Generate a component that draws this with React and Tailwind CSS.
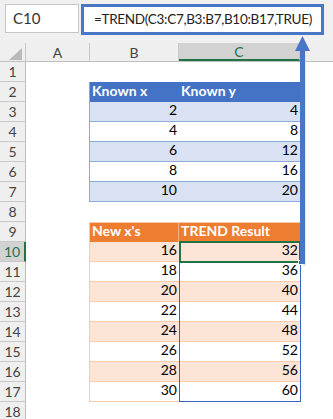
const FONT = { fontFamily: "Lato, 'Liberation Sans', sans-serif" };

const known = [
  [2, 4],
  [4, 8],
  [6, 12],
  [8, 16],
  [10, 20],
];
const newX = [16, 18, 20, 22, 24, 26, 28, 30];

function rowCells(n) {
  if (n === 2) {
    return {
      b: { text: "Known x", cls: "bg-[#4472c4] text-white font-bold justify-start pl-[2px] border-l border-l-[#8ea9db]" },
      c: { text: "Known y", cls: "bg-[#4472c4] text-white font-bold justify-start pl-[2px]" },
    };
  }
  if (n >= 3 && n <= 7) {
    const [x, y] = known[n - 3];
    const band = n % 2 === 1 ? "bg-[#d9e1f2]" : "bg-white";
    return {
      b: { text: x, cls: `${band} justify-end pr-[2px] border-l border-l-[#8ea9db] border-b border-b-[#8ea9db]` },
      c: { text: y, cls: `${band} justify-end pr-[2px] border-b border-b-[#8ea9db]` },
    };
  }
  if (n === 9) {
    return {
      b: { text: "New x's", cls: "bg-[#ed7d31] text-white font-bold justify-start pl-[2px] border-l border-l-[#f8cbad] border-t border-t-[#f8cbad] border-r border-r-[#f4b084]" },
      c: { text: "TREND Result", cls: "bg-[#ed7d31] text-white font-bold justify-start pl-[2px] border-t border-t-[#f8cbad]" },
    };
  }
  if (n >= 10 && n <= 17) {
    const x = newX[n - 10];
    const band = n % 2 === 0 ? "bg-[#fce4d6]" : "bg-white";
    return {
      b: { text: x, cls: `${band} justify-end pr-[2px] border-l border-l-[#f8cbad] border-b border-b-[#f8cbad]` },
      c: { text: x * 2, cls: `${band} justify-end pr-[2px] border-b border-b-[#f8cbad]` },
    };
  }
  return { b: { text: "", cls: "bg-white" }, c: { text: "", cls: "bg-white" } };
}

function Row({ n }) {
  const { b, c } = rowCells(n);
  const active = n === 10;
  return (
    <div className="flex h-[20px]">
      <div
        className={
          active
            ? "w-[26px] shrink-0 flex items-center justify-center bg-[#d2d2d2] text-[#217346] border-b border-b-[#c8c8c8] border-r-2 border-r-[#217346] text-[14px]"
            : "w-[26px] shrink-0 flex items-center justify-center bg-[#efefef] text-[#444] border-b border-b-[#c8c8c8] border-r border-r-[#bdbdbd] text-[14px]"
        }
      >
        {n}
      </div>
      <div className="w-[63px] shrink-0 bg-white" />
      <div className={`w-[90px] shrink-0 flex items-end pb-[1px] text-[14px] text-black ${b.cls}`}>{b.text}</div>
      <div className={`w-[121px] shrink-0 flex items-end pb-[1px] text-[14px] text-black ${c.cls}`}>{c.text}</div>
      <div className="flex-1 bg-white" />
    </div>
  );
}

export default function App() {
  const rows = Array.from({ length: 18 }, (_, i) => i + 1);
  return (
    <div className="w-[333px] h-[419px] overflow-hidden bg-white relative" style={FONT}>
      {/* formula bar */}
      <div className="h-[43px] bg-[#f0f0f0] flex items-start pt-[4px] pl-[5px] gap-[2px]">
        <div className="w-[74px] h-[29px] bg-white border border-[#c6c6c6] flex items-center pl-[7px] text-[15px] text-[#333]">
          C10
        </div>
        <div className="w-[243px] h-[31px] bg-white border-[3px] border-[#4a76c6] flex items-center pl-[10px] text-[13.5px] text-[#222] tracking-[-0.3px] whitespace-nowrap overflow-hidden">
          =TREND(C3:C7,B3:B7,B10:B17,TRUE)
        </div>
      </div>

      {/* column headers */}
      <div className="flex h-[19px] bg-[#efefef] border-b border-b-[#bfbfbf]">
        <div className="w-[26px] shrink-0 relative border-r border-r-[#c8c8c8]">
          <svg className="absolute left-[9px] top-[5px]" width="13" height="12" viewBox="0 0 13 12">
            <polygon points="13,0 13,12 0,12" fill="#b9b9b9" />
          </svg>
        </div>
        <div className="w-[64px] shrink-0 flex items-center justify-center text-[14px] text-[#444] border-r border-r-[#c8c8c8]">A</div>
        <div className="w-[89px] shrink-0 flex items-center justify-center text-[14px] text-[#444] border-r border-r-[#c8c8c8]">B</div>
        <div className="w-[121px] shrink-0 flex items-center justify-center text-[14px] text-[#217346] bg-[#d2d2d2] border-b-2 border-b-[#217346] border-r border-r-[#c8c8c8]">C</div>
        <div className="flex-1" />
      </div>

      {/* grid */}
      <div className="flex flex-col">
        {rows.map((n) => (
          <Row key={n} n={n} />
        ))}
      </div>

      {/* spill range outline C10:C17 */}
      <div className="absolute left-[179px] top-[242px] w-[122px] h-[160px] border border-[#3565c0] pointer-events-none" />
      {/* active cell C10 */}
      <div className="absolute left-[179px] top-[241px] w-[122px] h-[22px] border-2 border-[#217346] pointer-events-none" />
      <div className="absolute left-[298px] top-[260px] w-[5px] h-[5px] bg-[#217346] border border-white" />

      {/* arrow from result to formula */}
      <svg className="absolute left-[290px] top-[34px] pointer-events-none" width="26" height="236" viewBox="0 0 26 236">
        <rect x="13" y="16" width="3" height="216" fill="#d8d8d8" opacity="0.6" />
        <rect x="10" y="14" width="5" height="216" fill="#4a76c6" />
        <polygon points="12.5,2 5,17 20,17" fill="#4a76c6" />
      </svg>
    </div>
  );
}
